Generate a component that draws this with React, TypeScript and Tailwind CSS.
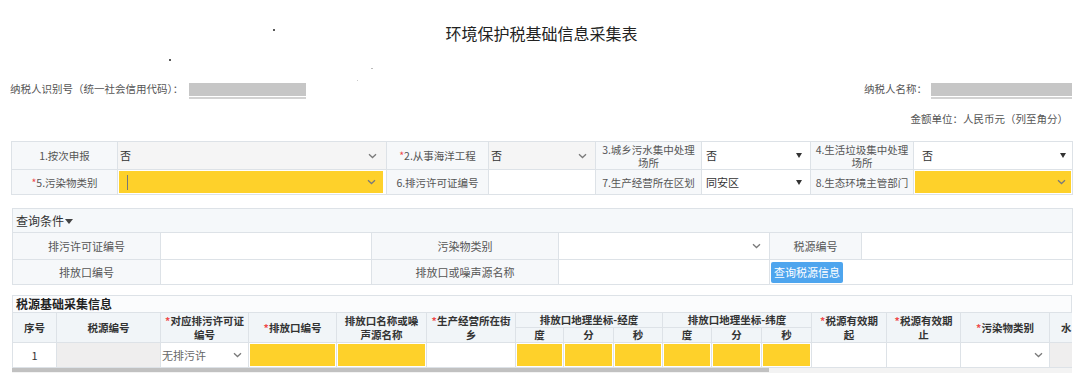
import React from "react";

const BC = "border-[#dde2e7]";

function Chev() {
  return (
    <svg width="9" height="6" viewBox="0 0 9 6" className="shrink-0">
      <path d="M1 1.2l3.5 3.3L8 1.2" stroke="#7a7a7a" strokeWidth="1.3" fill="none" />
    </svg>
  );
}

function Tri() {
  return (
    <svg width="6" height="5" viewBox="0 0 6 5" className="shrink-0">
      <path d="M0 0h6L3 5z" fill="#333" />
    </svg>
  );
}

function Star() {
  return <span className="text-[#ef4b4b]">*</span>;
}

function FL({ children, star }: { children: React.ReactNode; star?: boolean }) {
  return (
    <div className={`flex items-center justify-center text-center bg-[#f6f8fa] border-r border-b ${BC} text-[10.5px] leading-[13px] text-[#555] whitespace-nowrap`}>
      <span>
        {star && <Star />}
        {children}
      </span>
    </div>
  );
}

function Cell({ children, className = "" }: { children?: React.ReactNode; className?: string }) {
  return <div className={`flex border-r border-b ${BC} ${className}`}>{children}</div>;
}

function QL({ children }: { children: React.ReactNode }) {
  return (
    <div className={`flex items-center justify-center bg-[#f6f8fa] border-r border-b ${BC} text-[11px] text-[#555]`}>
      {children}
    </div>
  );
}

function TH({ children, rowSpan, colSpan, className = "" }: { children: React.ReactNode; rowSpan?: number; colSpan?: number; className?: string }) {
  return (
    <th
      rowSpan={rowSpan}
      colSpan={colSpan}
      className={`border ${BC} bg-[#f1f5f8] font-bold text-[#333] text-[10.5px] leading-[14px] text-center align-middle p-0 ${className}`}
    >
      {children}
    </th>
  );
}

export default function App() {
  const colCls = [
    "w-[44px]", "w-[104px]", "w-[88px]", "w-[88px]", "w-[90px]", "w-[89px]", "w-[48px]", "w-[50px]",
    "w-[49px]", "w-[49px]", "w-[50px]", "w-[50px]", "w-[75px]", "w-[74px]", "w-[89px]", "w-[110px]",
  ];
  return (
    <div className="relative w-[1080px] h-[374px] overflow-hidden bg-white text-[#333] font-['Noto_Sans_CJK_SC',sans-serif]">
      {/* stray dots */}
      <span className="absolute left-[273px] top-[29px] w-[2px] h-[2px] rounded-full bg-[#222]" />
      <span className="absolute left-[169px] top-[59px] w-[2px] h-[2px] rounded-full bg-[#222]" />
      <span className="absolute left-[371px] top-[68px] w-[2px] h-[1px] bg-[#bbb]" />
      <span className="absolute left-[357px] top-[80px] w-[1px] h-[1px] bg-[#ccc]" />

      {/* Title */}
      <div className="h-[79px] pt-[23px] flex justify-center">
        <div className="text-[16px] leading-[20px] text-[#222] pl-[3px]">环境保护税基础信息采集表</div>
      </div>

      {/* Taxpayer row */}
      <div className="h-[24px] flex justify-between pl-[10px] pr-[8px] text-[10.5px] text-[#555]">
        <div className="flex items-start">
          <span className="pt-[2px] leading-[16px]">纳税人识别号（统一社会信用代码）：</span>
          <div className="mt-[4px] ml-[6px] pb-[1px] border-b-2 border-[#d2d2d2]">
            <div className="w-[117px] h-[13px] bg-[#c6c6c6]" />
          </div>
        </div>
        <div className="flex items-start">
          <span className="pt-[2px] leading-[16px]">纳税人名称：</span>
          <div className="mt-[4px] ml-[4px] pb-[1px] border-b-2 border-[#d2d2d2]">
            <div className="w-[141px] h-[13px] bg-[#c6c6c6]" />
          </div>
        </div>
      </div>

      {/* unit row */}
      <div className="h-[38px] flex justify-end pr-[12px] pt-[8px] text-[10.5px] leading-[16px] text-[#555]">
        金额单位：人民币元（列至角分）
      </div>

      {/* Form grid */}
      <div className={`ml-[11px] w-[1062px] border-t border-l ${BC} grid grid-cols-[106px_269px_102px_107px_106px_109px_103px_159px] grid-rows-[28px_25px]`}>
        <FL>1.按次申报</FL>
        <Cell className="items-center justify-between bg-[#f5f5f5] pl-[2px] pr-[9px] text-[11px]">
          <span>否</span>
          <Chev />
        </Cell>
        <FL star>2.从事海洋工程</FL>
        <Cell className="items-center justify-between bg-[#f5f5f5] pl-[2px] pr-[8px] text-[11px]">
          <span>否</span>
          <Chev />
        </Cell>
        <FL>
          3.城乡污水集中处理
          <br />
          场所
        </FL>
        <Cell className="items-center justify-between bg-white pl-[4px] pr-[8px] text-[11px]">
          <span>否</span>
          <Tri />
        </Cell>
        <FL>
          4.生活垃圾集中处理
          <br />
          场所
        </FL>
        <Cell className="items-center justify-between bg-white pl-[8px] pr-[6px] text-[11px]">
          <span>否</span>
          <Tri />
        </Cell>

        <FL star>5.污染物类别</FL>
        <Cell className="p-[1px] pr-[3px]">
          <div className="flex-1 flex items-center justify-between bg-[#fed12a] pl-[8px] pr-[7px]">
            <span className="w-[1px] h-[15px] bg-[#777]" />
            <Chev />
          </div>
        </Cell>
        <FL>6.排污许可证编号</FL>
        <Cell className="bg-white" />
        <FL>7.生产经营所在区划</FL>
        <Cell className="items-center justify-between bg-white pl-[4px] pr-[8px] text-[11px]">
          <span>同安区</span>
          <Tri />
        </Cell>
        <FL>8.生态环境主管部门</FL>
        <Cell className="p-[1px]">
          <div className="flex-1 flex items-center justify-end bg-[#fed12a] pr-[5px]">
            <Chev />
          </div>
        </Cell>
      </div>

      {/* Query conditions */}
      <div className={`mt-[13px] ml-[12px] w-[1061px] border-t border-l ${BC} grid grid-cols-[148px_211px_187px_211px_92px_211px] grid-rows-[24px_27px_25px]`}>
        <div className={`col-span-6 flex items-center bg-[#f5f8fa] border-r border-b ${BC} pl-[3px] text-[12px] text-[#333]`}>
          查询条件
          <svg width="8" height="5" viewBox="0 0 8 5" className="ml-[1px] mt-[1px]">
            <path d="M0 0h8L4 5z" fill="#444" />
          </svg>
        </div>
        <QL>排污许可证编号</QL>
        <Cell className="bg-white" />
        <QL>污染物类别</QL>
        <Cell className="items-center justify-end bg-white pr-[8px]">
          <Chev />
        </Cell>
        <QL>税源编号</QL>
        <Cell className="bg-white" />

        <QL>排放口编号</QL>
        <Cell className="bg-white" />
        <QL>排放口或噪声源名称</QL>
        <Cell className="bg-white" />
        <div className={`col-span-2 flex items-center border-r border-b ${BC} pl-[1px]`}>
          <button className="w-[72px] h-[21px] rounded-[2px] bg-[#4ea5ee] text-white text-[11px] leading-[21px] text-center">
            查询税源信息
          </button>
        </div>
      </div>

      {/* Tax source table */}
      <div className="mt-[10px] ml-[12px] w-[1060px] overflow-hidden">
        <div className={`h-[17px] border ${BC} border-b-0 bg-[#fbfcfd] pl-[3px] text-[12px] leading-[16px] font-bold text-[#222]`}>
          税源基础采集信息
        </div>
        <table className="table-fixed border-collapse w-[1147px] text-[11px]">
          <colgroup>
            {colCls.map((c, i) => (
              <col key={i} className={c} />
            ))}
          </colgroup>
          <thead>
            <tr className="h-[15px]">
              <TH rowSpan={2}>序号</TH>
              <TH rowSpan={2}>税源编号</TH>
              <TH rowSpan={2}>
                <Star />对应排污许可证
                <br />
                编号
              </TH>
              <TH rowSpan={2}>
                <Star />排放口编号
              </TH>
              <TH rowSpan={2}>
                排放口名称或噪
                <br />
                声源名称
              </TH>
              <TH rowSpan={2}>
                <Star />生产经营所在街
                <br />
                乡
              </TH>
              <TH colSpan={3}>排放口地理坐标-经度</TH>
              <TH colSpan={3}>排放口地理坐标-纬度</TH>
              <TH rowSpan={2}>
                <Star />税源有效期
                <br />
                起
              </TH>
              <TH rowSpan={2}>
                <Star />税源有效期
                <br />
                止
              </TH>
              <TH rowSpan={2}>
                <Star />污染物类别
              </TH>
              <TH rowSpan={2} className="text-left pl-[11px]">
                水
              </TH>
            </tr>
            <tr className="h-[14px]">
              <TH>度</TH>
              <TH>分</TH>
              <TH>秒</TH>
              <TH>度</TH>
              <TH>分</TH>
              <TH>秒</TH>
            </tr>
          </thead>
          <tbody>
            <tr className="h-[25px]">
              <td className={`border ${BC} bg-white text-center text-[#333]`}>1</td>
              <td className={`border ${BC} bg-[#efeeee]`} />
              <td className={`border ${BC} bg-white p-0`}>
                <div className="flex items-center justify-between pl-[1px] pr-[6px] text-[#666]">
                  <span>无排污许</span>
                  <Chev />
                </div>
              </td>
              <td className={`border ${BC} p-[1px]`}>
                <div className="h-[22px] bg-[#fed12a]" />
              </td>
              <td className={`border ${BC} p-[1px]`}>
                <div className="h-[22px] bg-[#fed12a]" />
              </td>
              <td className={`border ${BC} bg-white`} />
              {[0, 1, 2, 3, 4, 5].map((i) => (
                <td key={i} className={`border ${BC} p-[1px]`}>
                  <div className="h-[22px] bg-[#fed12a]" />
                </td>
              ))}
              <td className={`border ${BC} bg-white`} />
              <td className={`border ${BC} bg-white`} />
              <td className={`border ${BC} bg-white p-0`}>
                <div className="flex items-center justify-end pr-[6px]">
                  <Chev />
                </div>
              </td>
              <td className={`border ${BC} bg-[#efeeee]`} />
            </tr>
          </tbody>
        </table>
        <div className="h-[5px] w-[1060px] bg-[#f3f3f3]">
          <div className="h-[4px] w-[757px] bg-[#c1c1c1]" />
        </div>
      </div>
    </div>
  );
}
